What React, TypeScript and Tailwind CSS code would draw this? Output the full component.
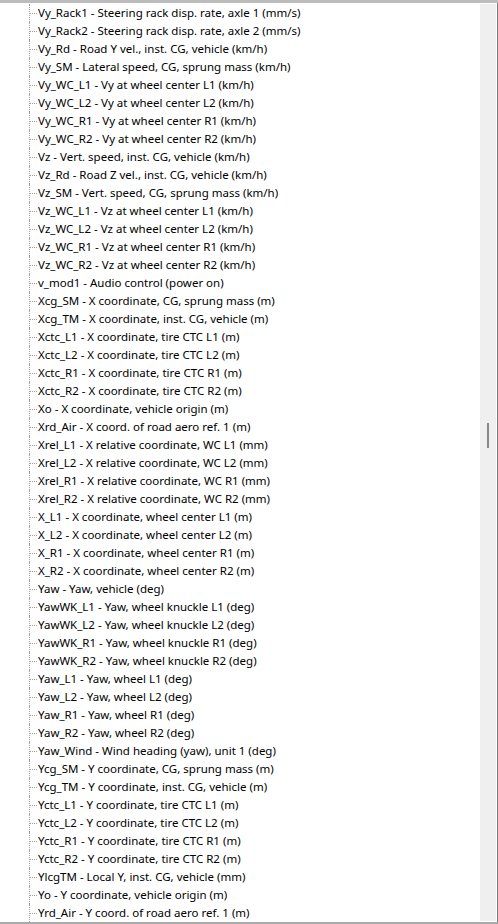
const items = [
  'Vy_Rack1 - Steering rack disp. rate, axle 1 (mm/s)',
  'Vy_Rack2 - Steering rack disp. rate, axle 2 (mm/s)',
  'Vy_Rd - Road Y vel., inst. CG, vehicle (km/h)',
  'Vy_SM - Lateral speed, CG, sprung mass (km/h)',
  'Vy_WC_L1 - Vy at wheel center L1 (km/h)',
  'Vy_WC_L2 - Vy at wheel center L2 (km/h)',
  'Vy_WC_R1 - Vy at wheel center R1 (km/h)',
  'Vy_WC_R2 - Vy at wheel center R2 (km/h)',
  'Vz - Vert. speed, inst. CG, vehicle (km/h)',
  'Vz_Rd - Road Z vel., inst. CG, vehicle (km/h)',
  'Vz_SM - Vert. speed, CG, sprung mass (km/h)',
  'Vz_WC_L1 - Vz at wheel center L1 (km/h)',
  'Vz_WC_L2 - Vz at wheel center L2 (km/h)',
  'Vz_WC_R1 - Vz at wheel center R1 (km/h)',
  'Vz_WC_R2 - Vz at wheel center R2 (km/h)',
  'v_mod1 - Audio control (power on)',
  'Xcg_SM - X coordinate, CG, sprung mass (m)',
  'Xcg_TM - X coordinate, inst. CG, vehicle (m)',
  'Xctc_L1 - X coordinate, tire CTC L1 (m)',
  'Xctc_L2 - X coordinate, tire CTC L2 (m)',
  'Xctc_R1 - X coordinate, tire CTC R1 (m)',
  'Xctc_R2 - X coordinate, tire CTC R2 (m)',
  'Xo - X coordinate, vehicle origin (m)',
  'Xrd_Air - X coord. of road aero ref. 1 (m)',
  'Xrel_L1 - X relative coordinate, WC L1 (mm)',
  'Xrel_L2 - X relative coordinate, WC L2 (mm)',
  'Xrel_R1 - X relative coordinate, WC R1 (mm)',
  'Xrel_R2 - X relative coordinate, WC R2 (mm)',
  'X_L1 - X coordinate, wheel center L1 (m)',
  'X_L2 - X coordinate, wheel center L2 (m)',
  'X_R1 - X coordinate, wheel center R1 (m)',
  'X_R2 - X coordinate, wheel center R2 (m)',
  'Yaw - Yaw, vehicle (deg)',
  'YawWK_L1 - Yaw, wheel knuckle L1 (deg)',
  'YawWK_L2 - Yaw, wheel knuckle L2 (deg)',
  'YawWK_R1 - Yaw, wheel knuckle R1 (deg)',
  'YawWK_R2 - Yaw, wheel knuckle R2 (deg)',
  'Yaw_L1 - Yaw, wheel L1 (deg)',
  'Yaw_L2 - Yaw, wheel L2 (deg)',
  'Yaw_R1 - Yaw, wheel R1 (deg)',
  'Yaw_R2 - Yaw, wheel R2 (deg)',
  'Yaw_Wind - Wind heading (yaw), unit 1 (deg)',
  'Ycg_SM - Y coordinate, CG, sprung mass (m)',
  'Ycg_TM - Y coordinate, inst. CG, vehicle (m)',
  'Yctc_L1 - Y coordinate, tire CTC L1 (m)',
  'Yctc_L2 - Y coordinate, tire CTC L2 (m)',
  'Yctc_R1 - Y coordinate, tire CTC R1 (m)',
  'Yctc_R2 - Y coordinate, tire CTC R2 (m)',
  'YlcgTM - Local Y, inst. CG, vehicle (mm)',
  'Yo - Y coordinate, vehicle origin (m)',
  'Yrd_Air - Y coord. of road aero ref. 1 (m)',
];

export default function App() {
  return (
    <div className="w-[498px] h-[924px] bg-white flex flex-col overflow-hidden font-['Noto_Sans',Arial,sans-serif]">
      <div className="h-[3px] bg-[#bcbcbc] shrink-0" />
      <div className="flex flex-1 min-h-0">
        {/* Tree list */}
        <div className="flex-1 pt-px overflow-hidden">
          {items.map((label) => (
            <div key={label} className="flex h-[18px] items-stretch">
              <div className="w-[29px] shrink-0" />
              <div className="w-[9px] shrink-0 border-l border-dotted border-[#a0a0a0] flex items-center">
                <div className="w-[7px] border-t border-dotted border-[#a0a0a0]" />
              </div>
              <span className="text-[11.5px] leading-[18px] text-black whitespace-nowrap">{label}</span>
            </div>
          ))}
        </div>
        {/* Scrollbar */}
        <div className="w-[16px] shrink-0 pt-px pb-px flex flex-col">
          <div className="flex-1 bg-[#efefef] relative">
            <div className="absolute left-[7px] top-[419px] w-[2px] h-[25px] bg-[#888888]" />
          </div>
        </div>
        <div className="w-px shrink-0" />
        <div className="w-[1px] shrink-0 bg-[#7b7b7b]" />
      </div>
      <div className="h-[2px] bg-[#a9a9a9] shrink-0" />
    </div>
  );
}
